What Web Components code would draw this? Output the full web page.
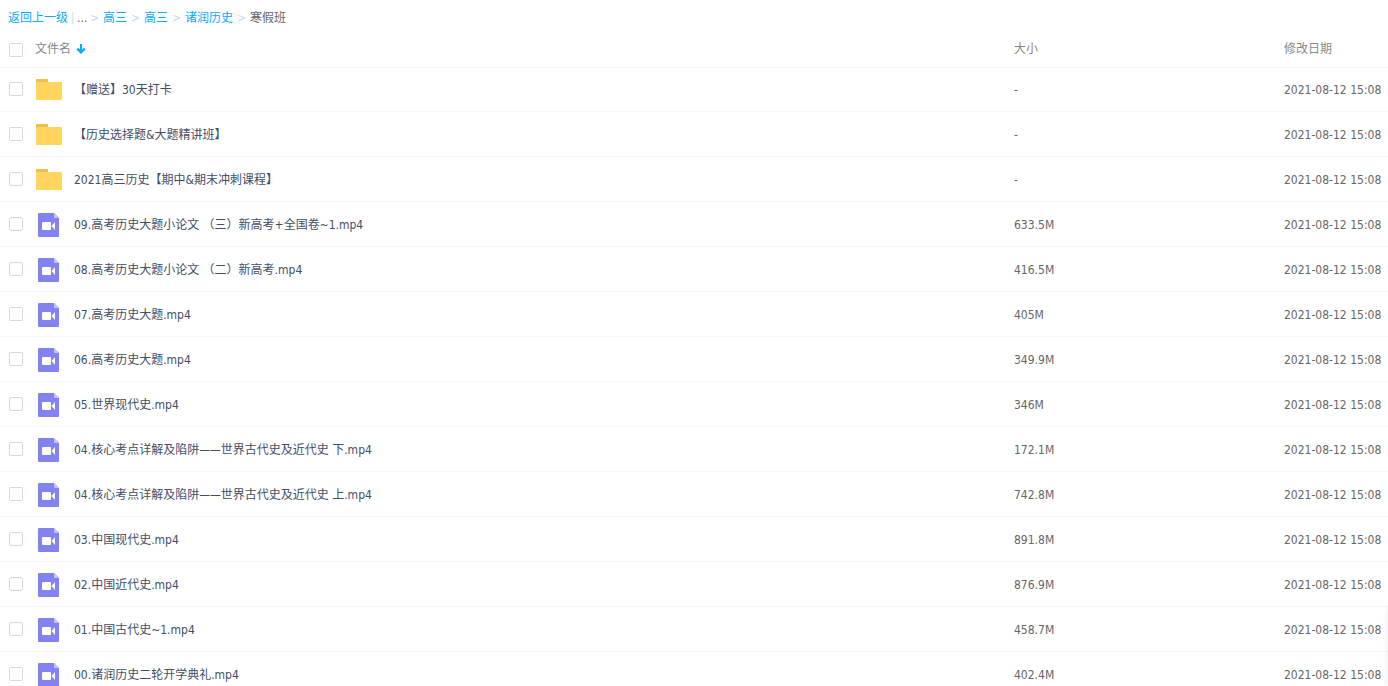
<!DOCTYPE html>
<html lang="zh-CN">
<head>
<meta charset="utf-8">
<title>寒假班</title>
<style>
  html, body { margin: 0; height: 100%; background: #fff; }
  body { font: 12px/18px "DejaVu Sans Condensed", "Noto Sans CJK SC", sans-serif; color: #424e67; }
</style>
</head>
<body>
<file-browser>
  <path-nav slot="path"></path-nav>
  <file-table></file-table>
</file-browser>

<script>
class FileBrowser extends HTMLElement {
  constructor() {
    super();
    this.attachShadow({ mode: "open" }).innerHTML = `
      <style>
        :host { display: flex; flex-direction: column; position: relative; height: 100vh; overflow: hidden; }
        main { flex: 1; min-height: 0; overflow-y: auto; scrollbar-width: none; }
        .drawer { position: absolute; left: 100%; bottom: 0; width: 40px; height: 80px; box-shadow: 0 0 6px rgba(0, 0, 0, .1); }
      </style>
      <slot name="path"></slot>
      <main><slot></slot></main>
      <div class="drawer"></div>`;
  }
}

class PathNav extends HTMLElement {
  constructor() {
    super();
    const sep = `<span class="sep">&gt;</span>`;
    this.attachShadow({ mode: "open" }).innerHTML = `
      <style>
        :host { display: block; padding: 9px 8px 0; }
        nav { display: flex; line-height: 18px; color: #666; white-space: nowrap; }
        a { color: #09aaff; text-decoration: none; }
        .sep { width: 17px; text-align: center; color: #c4dbfe; }
        .bar { width: 9px; text-align: center; color: #c4dbfe; }
        .more { width: 9px; }
      </style>
      <nav aria-label="路径">
        <a href="#up">返回上一级</a><span class="bar">|</span><span class="more">...</span>${sep}
        <a href="#1">高三</a>${sep}<a href="#2">高三</a>${sep}<a href="#3">诸润历史</a>${sep}<span>寒假班</span>
      </nav>`;
  }
}

class FileIcon extends HTMLElement {
  constructor() {
    super();
    const folder = `
      <path d="M0 8V3a1 1 0 0 1 1-1h10a1 1 0 0 1 1 1V8z" fill="#edc04c"/>
      <rect y="5" width="26" height="18" rx="1" fill="#ffd55e"/>`;
    const video = `
      <path d="M3 1h15l5 5v18a1 1 0 0 1-1 1H3a1 1 0 0 1-1-1V2a1 1 0 0 1 1-1z" fill="#8283f1"/>
      <path d="M18 1l5 5h-4a1 1 0 0 1-1-1z" fill="#c3c3f9"/>
      <rect x="6" y="10" width="9" height="8" rx="1" fill="#fff"/>
      <path d="M15.500 14l3.500-4v8z" fill="#fff"/>`;
    this.attachShadow({ mode: "open" }).innerHTML = `
      <style>:host { display: block; width: 26px; height: 26px; } svg { display: block; }</style>
      <svg width="26" height="26" viewBox="0 0 26 26" aria-hidden="true">${this.getAttribute("kind") === "folder" ? folder : video}</svg>`;
  }
}

class FileTable extends HTMLElement {
  constructor() {
    super();
    const files = [
      ["【赠送】30天打卡", "-"],
      ["【历史选择题&amp;大题精讲班】", "-"],
      ["2021高三历史【期中&amp;期末冲刺课程】", "-"],
      ["09.高考历史大题小论文 （三）新高考+全国卷~1.mp4", "633.5M"],
      ["08.高考历史大题小论文 （二）新高考.mp4", "416.5M"],
      ["07.高考历史大题.mp4", "405M"],
      ["06.高考历史大题.mp4", "349.9M"],
      ["05.世界现代史.mp4", "346M"],
      ["04.核心考点详解及陷阱——世界古代史及近代史 下.mp4", "172.1M"],
      ["04.核心考点详解及陷阱——世界古代史及近代史 上.mp4", "742.8M"],
      ["03.中国现代史.mp4", "891.8M"],
      ["02.中国近代史.mp4", "876.9M"],
      ["01.中国古代史~1.mp4", "458.7M"],
      ["00.诸润历史二轮开学典礼.mp4", "402.4M"]
    ];
    const rows = files.map(([name, size], i) => `
      <tr>
        <td><input type="checkbox" id="f${i}"></td>
        <td><div class="file"><file-icon kind="${size === "-" ? "folder" : "video"}"></file-icon><label for="f${i}">${name}</label></div></td>
        <td>${size}</td>
        <td>2021-08-12 15:08</td>
      </tr>`).join("");
    this.attachShadow({ mode: "open" }).innerHTML = `
      <style>
        :host { display: block; }
        table { width: 100%; table-layout: fixed; border-collapse: separate; border-spacing: 0; }
        th, td { box-sizing: border-box; padding: 0; text-align: left; vertical-align: middle; border-bottom: 1px solid #f2f6fd; white-space: nowrap; }
        th { height: 41px; padding-top: 3px; font-weight: normal; color: #888; }
        th:first-child { padding-top: 5px; }
        td { height: 45px; padding-top: 2px; color: #666; }
        td:first-child { padding-top: 0; }
        tbody tr:first-child td { height: 44px; padding-top: 0; }
        tbody tr:first-child td:first-child { padding-bottom: 1px; }
        th:first-child, td:first-child { width: 36px; padding-left: 9px; }
        .size { width: 270px; }
        .date { width: 104px; }
        input { appearance: none; display: block; box-sizing: border-box; width: 14px; height: 14px; margin: 0; border: 1px solid #d3d9e4; border-radius: 2px; background: #fff; }
        input:checked { background: #09aaff; border-color: #09aaff; }
        button { display: flex; align-items: center; gap: 5px; padding: 0; margin-left: -1px; border: 0; background: none; font: inherit; color: inherit; }
        .file { display: flex; align-items: center; gap: 12px; color: #424e67; }
      </style>
      <table>
        <thead>
          <tr>
            <th><input type="checkbox" aria-label="全选"></th>
            <th><button type="button">文件名<svg width="10" height="10" viewBox="0 0 10 10" aria-hidden="true"><path d="M5 0v8M1.200 4.600L5 8.400 8.800 4.600" fill="none" stroke="#09aaff" stroke-width="2.200"/></svg></button></th>
            <th class="size">大小</th>
            <th class="date">修改日期</th>
          </tr>
        </thead>
        <tbody>${rows}</tbody>
      </table>`;
  }
}

customElements.define("file-icon", FileIcon);
customElements.define("path-nav", PathNav);
customElements.define("file-table", FileTable);
customElements.define("file-browser", FileBrowser);
</script>
</body>
</html>
